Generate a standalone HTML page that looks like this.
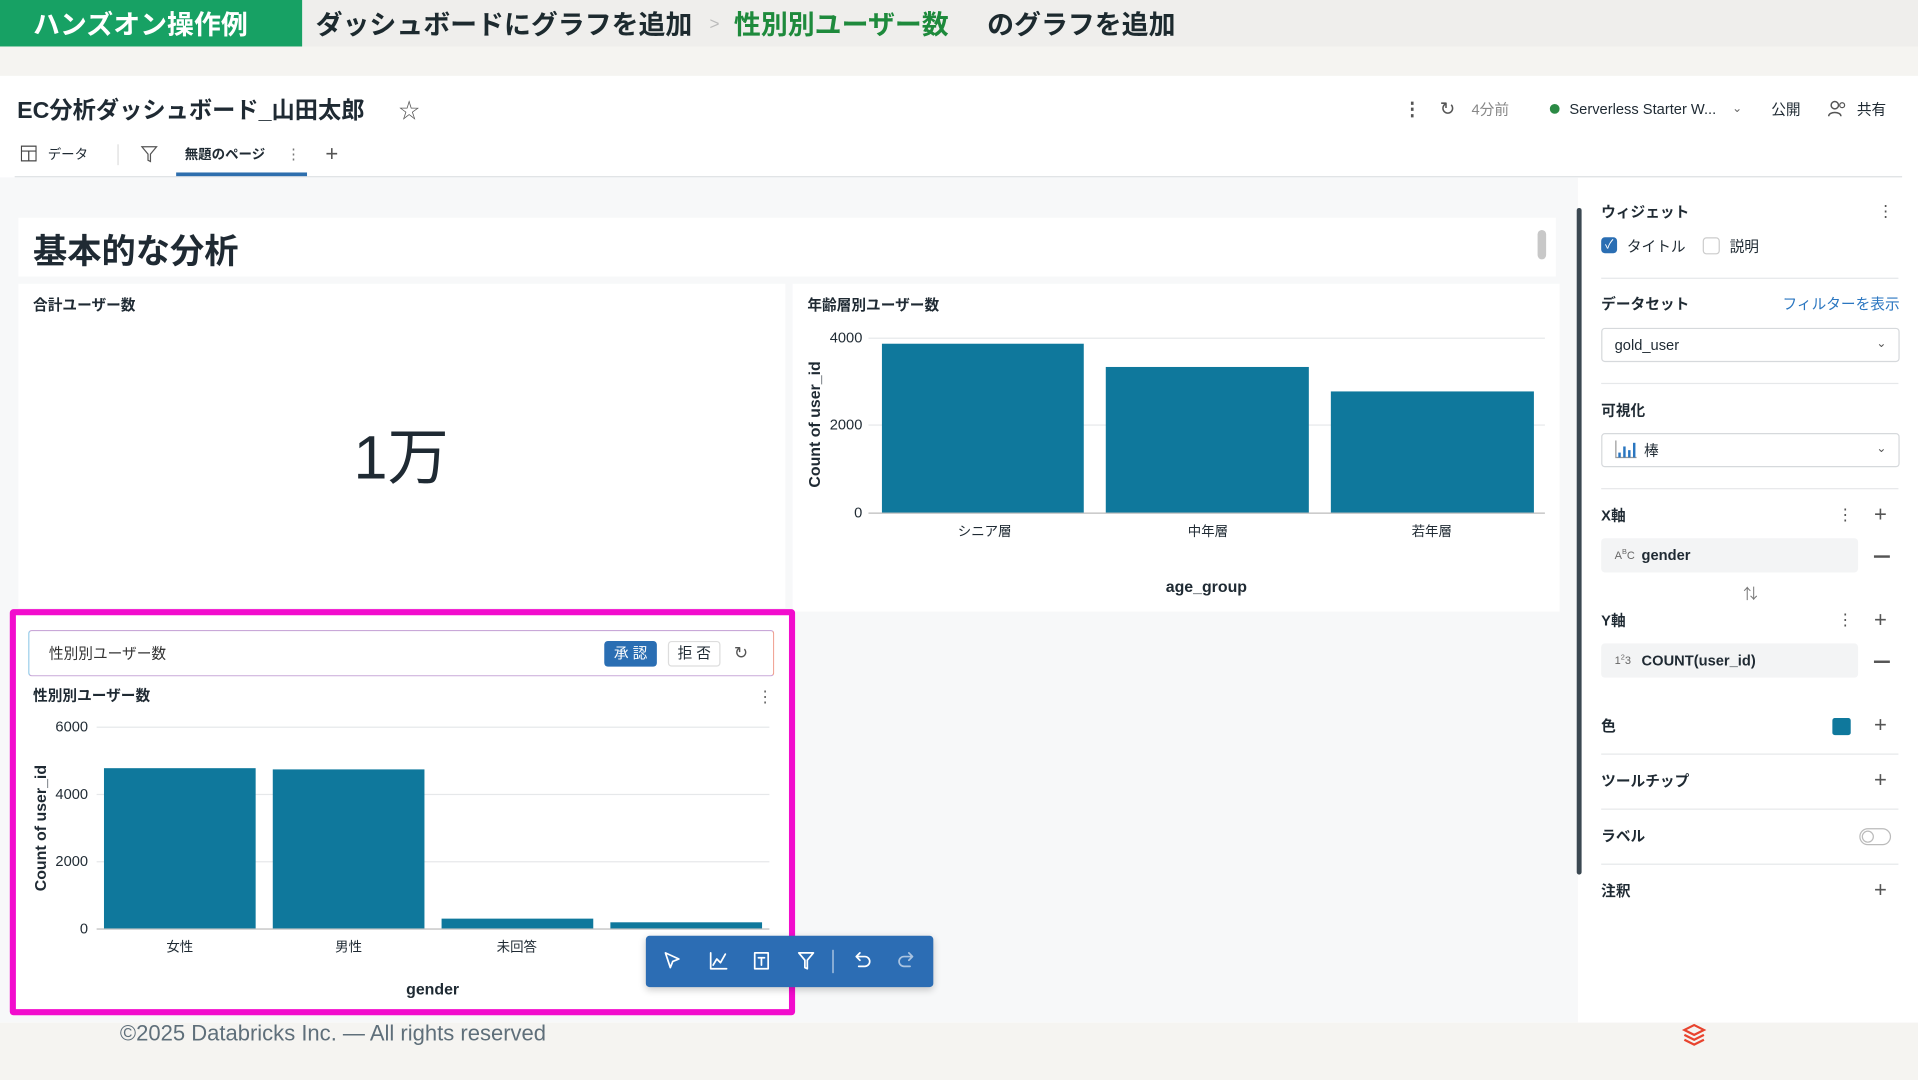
<!DOCTYPE html>
<html><head><meta charset="utf-8"><style>
html,body{margin:0;padding:0;width:1918px;height:1080px;overflow:hidden;background:#f5f4f1}
#s{position:absolute;left:0;top:0;width:1568px;height:883px;transform:scale(1.22321);transform-origin:0 0;font-family:"Liberation Sans","Noto Sans CJK JP",sans-serif;color:#1f2a33}
.a{position:absolute;white-space:nowrap}
.b{font-weight:bold}
.vc{transform:translateY(-50%)}
.hr{position:absolute;height:1px;background:#e6e8ea}
.plus{font-size:18px;color:#555}
</style></head><body><div id="s">
<!-- top banner -->
<div class="a" style="left:0;top:0;width:1568px;height:38px;background:#efeeec"></div>
<div class="a" style="left:0;top:0;width:247px;height:38px;background:#17a164"></div>
<div class="a b" style="left:27px;top:19px;transform:translateY(-50%);color:#fff;font-size:22px">ハンズオン操作例</div>
<div class="a b" style="left:258px;top:19px;transform:translateY(-50%);font-size:22px;color:#1d2a2f">ダッシュボードにグラフを追加</div>
<div class="a" style="left:580px;top:19px;transform:translateY(-50%);font-size:14px;color:#bbb">&gt;</div>
<div class="a b" style="left:600px;top:19px;transform:translateY(-50%);font-size:22px;color:#1e8a3c">性別別ユーザー数</div>
<div class="a b" style="left:807px;top:19px;transform:translateY(-50%);font-size:22px;color:#1d2a2f">のグラフを追加</div>
<!-- main white -->
<div class="a" style="left:0;top:62px;width:1568px;height:774px;background:#fff"></div>
<div class="a b vc" style="left:14px;top:89px;font-size:19px">EC分析ダッシュボード_山田太郎</div>
<div class="a vc" style="left:326px;top:89px;font-size:17px;color:#555">☆</div>
<div class="a vc b" style="left:1147px;top:89px;font-size:15px;color:#555">⋮</div>
<div class="a vc" style="left:1177px;top:89px;font-size:15px;color:#555">↻</div>
<div class="a vc" style="left:1203px;top:89px;font-size:12px;color:#888">4分前</div>
<div class="a" style="left:1267px;top:85px;width:8px;height:8px;border-radius:50%;background:#2b8a45"></div>
<div class="a vc" style="left:1283px;top:89px;font-size:12px">Serverless Starter W...</div>
<div class="a vc" style="left:1416px;top:89px;font-size:10px;color:#666">⌄</div>
<div class="a vc" style="left:1448px;top:89px;font-size:12px">公開</div>
<svg class="a" style="left:1494px;top:82px" width="16" height="14" viewBox="0 0 16 14"><circle cx="6" cy="4" r="3" fill="none" stroke="#555" stroke-width="1.2"/><path d="M1 13c0-4 10-4 10 0" fill="none" stroke="#555" stroke-width="1.2"/><circle cx="12" cy="4" r="2" fill="none" stroke="#555"/></svg>
<div class="a vc" style="left:1518px;top:89px;font-size:12px">共有</div>
<!-- tabs -->
<svg class="a" style="left:17px;top:119px" width="13" height="13"><rect x=".5" y=".5" width="12" height="12" fill="none" stroke="#444"/><path d="M.5 4.5h12M6.5 4.5v8" stroke="#444"/></svg>
<div class="a vc" style="left:39px;top:126px;font-size:11px">データ</div>
<div class="a" style="left:96px;top:118px;width:1px;height:17px;background:#ddd"></div>
<svg class="a" style="left:115px;top:119px" width="14" height="14"><path d="M1 1h12L8 7v6L6 12V7z" fill="none" stroke="#555"/></svg>
<div class="a vc b" style="left:151px;top:126px;font-size:11px">無題のページ</div>
<div class="a vc" style="left:234px;top:126px;font-size:12px;color:#777">⋮</div>
<div class="a vc plus" style="left:266px;top:126px">+</div>
<div class="a" style="left:12px;top:144px;width:1543px;height:1px;background:#dcdfe2"></div>
<div class="a" style="left:144px;top:141px;width:107px;height:3px;background:#2e6fae"></div>
<!-- canvas -->
<div class="a" style="left:0;top:145px;width:1290px;height:691px;background:#f7f8f9"></div>
<div class="a" style="left:15px;top:178px;width:1257px;height:48px;background:#fff"></div>
<div class="a b vc" style="left:27px;top:204px;font-size:28px">基本的な分析</div>
<div class="a" style="left:1257px;top:188px;width:7px;height:24px;border-radius:4px;background:#c8c8c8"></div>
<div class="a" style="left:15px;top:232px;width:627px;height:265px;background:#fff"></div>
<div class="a b vc" style="left:27px;top:249px;font-size:12px">合計ユーザー数</div>
<div class="a vc" style="left:289px;top:370px;font-size:50px">1万</div>
<div class="a" style="left:648px;top:232px;width:627px;height:268px;background:#fff"></div>
<div class="a b vc" style="left:660px;top:249px;font-size:12px">年齢層別ユーザー数</div>
<div class="hr" style="left:710px;top:276px;width:553px"></div>
<div class="hr" style="left:710px;top:347px;width:553px"></div>
<div class="a" style="left:710px;top:419px;width:553px;height:1px;background:#bbb"></div>
<div class="a vc" style="right:863px;top:276px;font-size:12px">4000</div>
<div class="a vc" style="right:863px;top:347px;font-size:12px">2000</div>
<div class="a vc" style="right:863px;top:419px;font-size:12px">0</div>
<div class="a" style="left:721px;top:281px;width:165px;height:138px;background:#0f789c"></div>
<div class="a" style="left:904px;top:300px;width:166px;height:119px;background:#0f789c"></div>
<div class="a" style="left:1088px;top:320px;width:166px;height:99px;background:#0f789c"></div>
<div class="a" style="left:783px;top:426px;font-size:11px">シニア層</div>
<div class="a" style="left:971px;top:426px;font-size:11px">中年層</div>
<div class="a" style="left:1154px;top:426px;font-size:11px">若年層</div>
<div class="a b" style="left:953px;top:472px;font-size:13px">age_group</div>
<div class="a b" style="left:666px;top:347px;font-size:13px;transform:translate(-50%,-50%) rotate(-90deg)">Count of user_id</div>
<!-- magenta widget -->
<div class="a" style="left:8px;top:498px;width:632px;height:322px;border:5px solid #f20ccd;border-radius:3px;background:#fff"></div>
<div class="a" style="left:23px;top:515px;width:608px;height:36px;border:1px solid #c9a8d8;border-left-color:#8cc6e6;border-right-color:#f0a090;border-radius:3px"></div>
<div class="a vc" style="left:40px;top:534px;font-size:12px;color:#333">性別別ユーザー数</div>
<div class="a" style="left:494px;top:524px;width:43px;height:21px;background:#2a6eb3;border-radius:3px;color:#fff;font-size:12px;line-height:21px;text-align:center">承 認</div>
<div class="a" style="left:546px;top:524px;width:41px;height:19px;border:1px solid #ddd;border-radius:3px;font-size:12px;line-height:19px;text-align:center">拒 否</div>
<div class="a vc" style="left:600px;top:534px;font-size:14px;color:#555">↻</div>
<div class="a b vc" style="left:27px;top:568px;font-size:12px">性別別ユーザー数</div>
<div class="a vc" style="left:619px;top:570px;font-size:13px;color:#666">⋮</div>
<div class="hr" style="left:79px;top:594px;width:550px"></div>
<div class="hr" style="left:79px;top:649px;width:550px"></div>
<div class="hr" style="left:79px;top:704px;width:550px"></div>
<div class="a" style="left:79px;top:759px;width:550px;height:1px;background:#bbb"></div>
<div class="a vc" style="right:1496px;top:594px;font-size:12px">6000</div>
<div class="a vc" style="right:1496px;top:649px;font-size:12px">4000</div>
<div class="a vc" style="right:1496px;top:704px;font-size:12px">2000</div>
<div class="a vc" style="right:1496px;top:759px;font-size:12px">0</div>
<div class="a" style="left:85px;top:628px;width:124px;height:131px;background:#0f789c"></div>
<div class="a" style="left:223px;top:629px;width:124px;height:130px;background:#0f789c"></div>
<div class="a" style="left:361px;top:751px;width:124px;height:8px;background:#0f789c"></div>
<div class="a" style="left:499px;top:754px;width:124px;height:5px;background:#0f789c"></div>
<div class="a" style="left:136px;top:766px;font-size:11px">女性</div>
<div class="a" style="left:274px;top:766px;font-size:11px">男性</div>
<div class="a" style="left:406px;top:766px;font-size:11px">未回答</div>
<div class="a b" style="left:332px;top:801px;font-size:13px">gender</div>
<div class="a b" style="left:33px;top:677px;font-size:13px;transform:translate(-50%,-50%) rotate(-90deg)">Count of user_id</div>
<!-- toolbar -->
<div class="a" style="left:528px;top:765px;width:235px;height:42px;background:#2c6db4;border-radius:3px;box-shadow:0 2px 6px rgba(0,0,0,.2)"></div>
<svg class="a" style="left:528px;top:765px" width="235" height="42" fill="none" stroke="#fff" stroke-width="1.4" stroke-linejoin="round" stroke-linecap="round">
<path d="M16 14l11 5-5 2-2 5z"/>
<path d="M53 14v13h13M55 24l3-5 3 3 4-7"/>
<rect x="89" y="14" width="11" height="13"/><path d="M92 18h5M94.5 18v6"/>
<path d="M125 14h12l-5 6v7l-2-1v-6z"/>
<path d="M153 12v18" stroke-opacity=".5"/>
<path d="M172 17h7a4 4 0 010 8h-5M172 17l3-3M172 17l3 3"/>
<path d="M218 17h-7a4 4 0 000 8h5M218 17l-3-3M218 17l-3 3" stroke-opacity=".6"/>
</svg>
<!-- right panel -->
<div class="a" style="left:1289px;top:170px;width:4px;height:545px;background:#3b4852;border-radius:2px"></div>
<div class="a b vc" style="left:1309px;top:173px;font-size:12px">ウィジェット</div>
<div class="a vc" style="left:1535px;top:173px;font-size:13px;color:#555">⋮</div>
<div class="a" style="left:1309px;top:194px;width:13px;height:13px;background:#2a6eb3;border-radius:3px;color:#fff;font-size:10px;line-height:13px;text-align:center">✓</div>
<div class="a vc" style="left:1330px;top:201px;font-size:12px">タイトル</div>
<div class="a" style="left:1392px;top:194px;width:12px;height:12px;border:1px solid #ccc;border-radius:3px"></div>
<div class="a vc" style="left:1414px;top:201px;font-size:12px">説明</div>
<div class="hr" style="left:1309px;top:227px;width:243px"></div>
<div class="a b vc" style="left:1309px;top:248px;font-size:12px">データセット</div>
<div class="a vc" style="right:15px;top:248px;font-size:12px;color:#2a76c0">フィルターを表示</div>
<div class="a" style="left:1309px;top:268px;width:242px;height:26px;border:1px solid #d6d9dc;border-radius:3px"></div>
<div class="a vc" style="left:1320px;top:282px;font-size:12px">gold_user</div>
<div class="a vc" style="left:1534px;top:281px;font-size:10px;color:#555">⌄</div>
<div class="hr" style="left:1309px;top:313px;width:243px"></div>
<div class="a b vc" style="left:1309px;top:335px;font-size:12px">可視化</div>
<div class="a" style="left:1309px;top:354px;width:242px;height:26px;border:1px solid #d6d9dc;border-radius:3px"></div>
<svg class="a" style="left:1320px;top:360px" width="18" height="15"><path d="M1 0v14h17" stroke="#999" fill="none"/><rect x="3" y="10" width="2" height="4" fill="#2a76c0"/><rect x="7" y="5" width="2" height="9" fill="#2a76c0"/><rect x="11" y="8" width="2" height="6" fill="#2a76c0"/><rect x="15" y="2" width="2" height="12" fill="#2a76c0"/></svg>
<div class="a vc" style="left:1344px;top:368px;font-size:12px">棒</div>
<div class="a vc" style="left:1534px;top:367px;font-size:10px;color:#555">⌄</div>
<div class="hr" style="left:1309px;top:399px;width:243px"></div>
<div class="a b vc" style="left:1309px;top:421px;font-size:12px">X軸</div>
<div class="a vc" style="left:1502px;top:421px;font-size:13px;color:#555">⋮</div>
<div class="a vc plus" style="left:1532px;top:421px">+</div>
<div class="a" style="left:1309px;top:440px;width:210px;height:28px;background:#f3f4f5;border-radius:3px"></div>
<div class="a vc" style="left:1320px;top:454px;font-size:9px;color:#666">A<sup style="font-size:6px">B</sup>C</div>
<div class="a b vc" style="left:1342px;top:454px;font-size:12px">gender</div>
<div class="a" style="left:1532px;top:454px;width:13px;height:1.5px;background:#555"></div>
<div class="a vc" style="left:1425px;top:485px;font-size:12px;color:#777">⇅</div>
<div class="a b vc" style="left:1309px;top:507px;font-size:12px">Y軸</div>
<div class="a vc" style="left:1502px;top:507px;font-size:13px;color:#555">⋮</div>
<div class="a vc plus" style="left:1532px;top:507px">+</div>
<div class="a" style="left:1309px;top:526px;width:210px;height:28px;background:#f3f4f5;border-radius:3px"></div>
<div class="a vc" style="left:1320px;top:540px;font-size:9px;color:#666">1<sup style="font-size:6px">2</sup>3</div>
<div class="a b vc" style="left:1342px;top:540px;font-size:12px">COUNT(user_id)</div>
<div class="a" style="left:1532px;top:540px;width:13px;height:1.5px;background:#555"></div>
<div class="a b vc" style="left:1309px;top:593px;font-size:12px">色</div>
<div class="a" style="left:1498px;top:587px;width:15px;height:14px;background:#0f789c;border-radius:2px"></div>
<div class="a vc plus" style="left:1532px;top:593px">+</div>
<div class="hr" style="left:1309px;top:616px;width:243px"></div>
<div class="a b vc" style="left:1309px;top:638px;font-size:12px">ツールチップ</div>
<div class="a vc plus" style="left:1532px;top:638px">+</div>
<div class="hr" style="left:1309px;top:661px;width:243px"></div>
<div class="a b vc" style="left:1309px;top:683px;font-size:12px">ラベル</div>
<div class="a" style="left:1520px;top:677px;width:24px;height:12px;border:1px solid #bbb;border-radius:7px"></div>
<div class="a" style="left:1522px;top:679px;width:10px;height:10px;border-radius:50%;border:1px solid #bbb;box-sizing:border-box"></div>
<div class="hr" style="left:1309px;top:706px;width:243px"></div>
<div class="a b vc" style="left:1309px;top:728px;font-size:12px">注釈</div>
<div class="a vc plus" style="left:1532px;top:728px">+</div>
<!-- footer -->
<div class="a vc" style="left:98px;top:845px;font-size:18px;color:#5f6f7a">©2025 Databricks Inc. — All rights reserved</div>
<svg class="a" style="left:1375px;top:836px" width="20" height="20"><path d="M2 6l8-4 8 4-8 4z M2 10l8 4 8-4 M2 14l8 4 8-4" fill="none" stroke="#e8432e" stroke-width="1.8"/></svg>
</div></body></html>
